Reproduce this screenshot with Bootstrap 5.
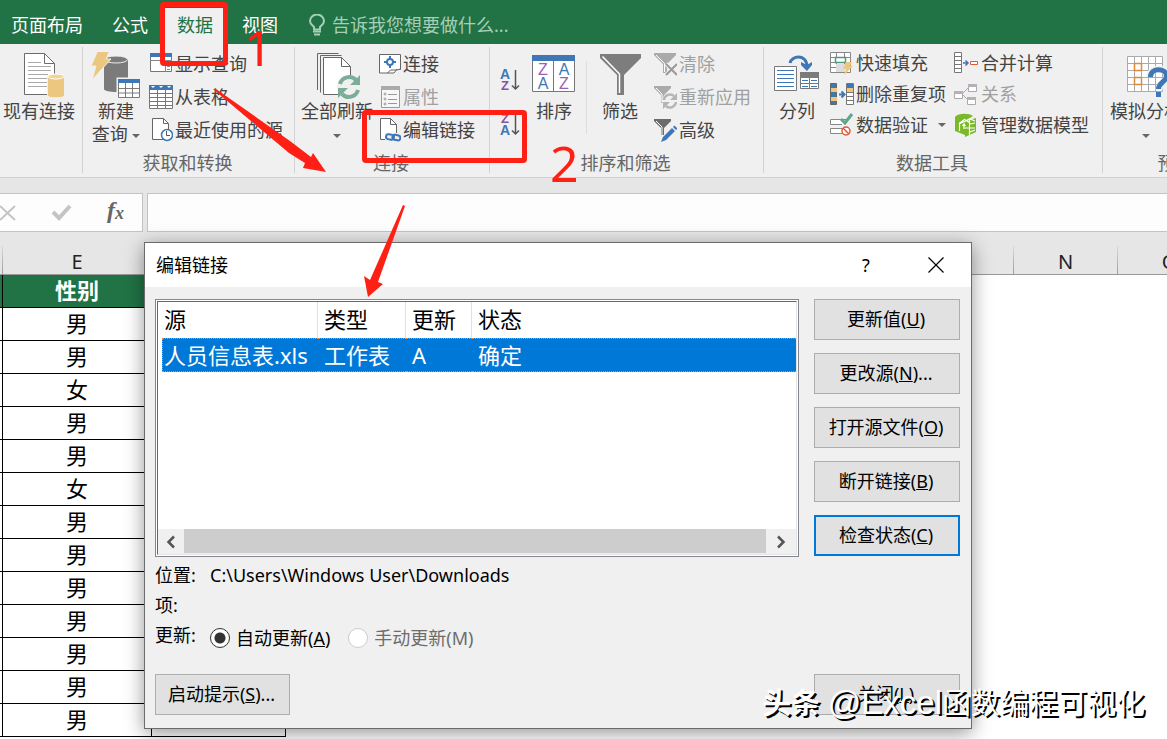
<!DOCTYPE html>
<html lang="zh-CN">
<head>
<meta charset="utf-8">
<meta name="viewport" content="width=device-width, initial-scale=1">
<title>编辑链接</title>
<link href="https://cdn.jsdelivr.net/npm/bootstrap@5.3.0/dist/css/bootstrap.min.css" rel="stylesheet">
<style>
:root { --ui: "Noto Sans", "Noto Sans CJK SC", sans-serif; --green: #217346; --red: #ff2015; }
body { font-family: var(--ui); font-size: 18px; line-height: 24px; color: #444; background: #fff; overflow: hidden; height: 100vh; }
svg { display: block; flex: none; }
button { color: inherit; }

/* tab strip */
.tab-strip { background: var(--green); height: 44px; padding-top: 8px; gap: 1px; }
.tab-strip .nav-link { color: #fff; padding: 5px 14px 7px; height: 36px; line-height: 24px; border-radius: 0; }
.tab-strip .nav-link.first-tab { padding-left: 11px; }
.tab-strip .nav-link.active { background: #f0f0f0; color: var(--green); }
.tell-me { color: #a6cfb7; margin-left: 16px; padding-bottom: 2px; gap: 7px; }
.tell-me input { background: none; border: 0; color: inherit; padding: 0; width: 260px; outline: 0; }
.tell-me input::placeholder { color: #a6cfb7; opacity: 1; }

/* ribbon */
.ribbon { background: #f0f0f0; border-bottom: 1px solid #d2d2d2; height: 134px; padding-top: 3px; overflow: hidden; }
.ribbon-group { flex: none; height: 126px; border-right: 1px solid #d2d2d2; }
.group-body { height: 105px; }
.group-label { text-align: center; color: #666; line-height: 22px; height: 22px; padding-right: 2px; }
.big-btn, .small-btn { background: none; border: 0; padding: 0; white-space: nowrap; }
.big-btn { display: flex; flex-direction: column; align-items: center; line-height: 23px; padding-top: 5px; flex: none; }
.small-btn { display: flex; align-items: center; gap: 2px; height: 33px; }
.rows-31 .small-btn { height: 31px; }
.small-btn:disabled { color: #a0a0a0; }
.caret { display: inline-block; border: 4px solid transparent; border-top-color: #666; border-bottom: 0; vertical-align: middle; }
.g-conn { width: 83px; }
.g-conn .big-btn { margin-left: 3px; }
.g-get { width: 212px; }
.g-link { width: 195px; }
.g-link .big-btn { margin-left: 6px; }
.g-sort { width: 274px; }
.g-tools { width: 339px; }
.g-forecast { width: 150px; border: 0; }
.g-forecast .big-btn { margin-left: 5px; }
.g-forecast .group-label { padding-right: 5px; }
.inner-rule { width: 1px; height: 73px; margin-top: 14px; background: #dedede; }

/* formula bar */
.formula-row { background: #e6e6e6; padding: 15px 0 0; gap: 4px; height: 54px; }
.fx-box, .fx-input { background: #fdfdfd; border: 1px solid #c3c3c3; height: 39px; }
.fx-box { width: 143px; border-left: 0; flex: none; }
.fx-box button { background: none; border: 0; padding: 0; }
.fx-input { flex: 1; border-right: 0; border-radius: 0; min-width: 0; outline: 0; }

/* sheet */
.col-heads { background: #e6e6e6; border-bottom: 1px solid #999; height: 43px; padding-top: 14px; color: #222; font-size: 20px; line-height: 32px; overflow: hidden; }
.col-heads > div { flex: none; text-align: center; width: 104px; border-right: 1px solid; border-image: linear-gradient(#ddd, #999) 1; }
.col-heads .w-d { width: 3px; }
.col-heads .w-e { width: 149px; }
.col-heads .w-f { width: 134px; }
.grid-table { table-layout: fixed; width: 286px; border-collapse: separate; border-spacing: 0; font-size: 22px; line-height: 30px; color: #000; text-align: center; }
.grid-table th, .grid-table td { height: 33px; padding: 0 0 2px; border-right: 1px solid #000; border-bottom: 1px solid #000; overflow: hidden; }
.grid-table th { background: var(--green); color: #fff; font-weight: 700; }
.grid-table th:nth-child(2) { border-right-color: var(--green); }

/* dialog window */
.link-dialog { position: absolute; left: 144px; right: 195px; top: 242px; background: #f0f0f0; border: 1px solid #6b6b6b; box-shadow: 0 4px 18px rgba(0,0,0,.42); color: #000; z-index: 5; }
.title-bar { background: #fff; height: 44px; padding-left: 11px; }
.title-bar button { background: none; border: 0; padding: 0; width: 70px; display: flex; align-items: center; justify-content: center; font-size: 18px; }
.dialog-body { padding: 12px 11px 13px 10px; gap: 15px; }
.list-frame { height: 258px; background: #fff; border: 1px solid #828790; padding: 1px; }
.list-inner { height: 100%; border: 1px solid #e3e3e3; border-left-color: #696969; border-top-color: #696969; display: flex; flex-direction: column; }
.links-table { width: calc(100% - 4px); margin-left: 4px; table-layout: fixed; font-size: 22px; border-collapse: separate; border-spacing: 0; }
.links-table th { font-weight: 400; height: 36px; line-height: 34px; padding: 0 0 2px 6px; border-right: 1px solid #e0e0e0; white-space: nowrap; }
.links-table th:first-child { padding-left: 2px; }
.links-table td:first-child { padding-left: 1px; }
.links-table th:last-child { border-right: 0; }
.links-table td { background: #0078d7; color: #fff; height: 34px; line-height: 32px; padding: 0 0 0 6px; border-top: 1px dotted #ff8728; border-bottom: 1px dotted #ff8728; white-space: nowrap; }
.links-table td:first-child { border-left: 1px dotted #ff8728; }
.h-scroll { margin-top: auto; background: #f0f0f0; height: 25px; }
.h-scroll button { border: 0; background: none; padding: 0; width: 26px; display: flex; align-items: center; justify-content: center; }
.h-scroll .right-arrow { width: 30px; }
.h-thumb { flex: 1; background: #cdcdcd; margin-bottom: 1px; }
.btn-col { width: 146px; flex: none; gap: 13px; }
.win-btn { background: #e1e1e1; border: 1px solid #adadad; height: 41px; padding: 0 2px 2px 0; color: #000; }
.win-btn.is-default { border: 2px solid #0078d7; }
.win-btn.prompt-btn { width: 135px; }
.info-rows { gap: 6px; padding-top: 6px; height: 117px; }
.info-rows .caption { width: 55px; flex: none; }
.radio-line { padding-top: 3px; }
.radio-line input { appearance: none; width: 20px; height: 20px; margin: 0 6px 0 0; border: 1px solid #333; border-radius: 50%; background: #fff; flex: none; }
.radio-line input:checked { background: radial-gradient(circle, #333 0 5px, #fff 6px); }
.radio-line input:disabled { border-color: #ccc; }
.radio-line label { margin-right: 18px; }
.radio-line input:disabled + label { color: #6d6d6d; }

/* tutorial marks over the window */
.marks { position: absolute; inset: 0; z-index: 10; pointer-events: none; overflow: hidden; }
.mark-box { position: absolute; border: 5px solid var(--red); border-radius: 4px; }
.mark-num { position: absolute; color: var(--red); font-size: 50px; line-height: 50px; }
.marks svg { position: absolute; left: 0; top: 0; }
.stamp { position: absolute; right: 22px; bottom: 18px; font-size: 29px; line-height: 36px; color: #fff; text-shadow: 2px 2px 0 #000; white-space: nowrap; }
.stamp .latin { font-family: "Liberation Sans", sans-serif; font-size: 33px; }
</style>
</head>
<body>

<nav class="tab-strip nav flex-nowrap">
  <a class="nav-link first-tab" href="#">页面布局</a>
  <a class="nav-link" href="#">公式</a>
  <a class="nav-link active" href="#">数据</a>
  <a class="nav-link" href="#">视图</a>
  <label class="tell-me d-flex align-items-center">
    <svg width="16" height="22" viewBox="0 0 16 22" fill="none" stroke="#a6cfb7" stroke-width="2"><path d="M5 15.500V13C3 11 1 10 1 7a7 6.500 0 0 1 14 0c0 3-2 4-4 6v2.500z"/><path d="M4 17.500h8M5 20.500h6"/></svg>
    <input type="text" placeholder="告诉我您想要做什么..." aria-label="告诉我您想要做什么">
  </label>
</nav>

<div class="ribbon d-flex">
  <section class="ribbon-group g-conn">
    <div class="group-body">
      <button class="big-btn"><svg width="70" height="48" viewBox="3 52 70 48"><path d="M23.500 53.500h20l10 10V94.500h-30z" fill="#fff" stroke="#6b6b6b"/><path d="M43.500 53.500v10h10" fill="none" stroke="#6b6b6b"/><path d="M27 62.500h13M27 66.500h23M27 70.500h23M27 74.500h20M27 78.500h20M27 82.500h20M27 86.500h19" stroke="#aaa"/><path d="M46.500 76.500v19c0 3 17 3 17 0v-19z" fill="#ecc77f" stroke="#f0f0f0"/><ellipse cx="55" cy="76.500" rx="8" ry="2.500" fill="#f3d493" stroke="#fff"/></svg>现有连接</button>
    </div>
  </section>

  <section class="ribbon-group g-get">
    <div class="group-body d-flex">
      <button class="big-btn ms-2"><svg width="50" height="48" viewBox="91 52 50 48"><path d="M104 59v30c0 4 24 4 24 0V59z" fill="#7b7b7b"/><ellipse cx="116" cy="59.500" rx="11.500" ry="3.500" fill="#7b7b7b" stroke="#eee"/><path d="M98 50h12l-4 9h5L92 80l4-14h-5z" fill="#ecc77f" stroke="#f0f0f0"/><path d="M118 79h22v19h-22z" fill="#fff" stroke="#f0f0f0" stroke-width="3"/><path d="M118.500 79.500h21v18h-21zM118.500 88.500h21M118.500 93h21M125.500 82v16M132.500 82v16" fill="#fff" stroke="#7a7a7a"/><path d="M118 79h22v4h-22z" fill="#3f76b5"/></svg><span>新建</span><span>查询 <i class="caret"></i></span></button>
      <div class="ps-2">
        <button class="small-btn"><svg width="24" height="24" viewBox="148 53 24 24"><path d="M149.500 54.500h21v18h-21z" fill="#fff" stroke="#777"/><path d="M149 54h22v4h-22z" fill="#3f76b5"/><path d="M149 61.500h22M164.500 61v12M166 64.500h3M166 67.500h3M166 70.500h3" stroke="#888"/></svg>显示查询</button>
        <button class="small-btn"><svg width="24" height="24" viewBox="148 85 24 24"><path d="M148.500 85.500h23v23h-23zM148 93.500h24M148 97.500h24M148 101.500h24M148 105.500h24M156.500 89v20M164.500 89v20" fill="#fff" stroke="#777"/><path d="M148 85h24v5h-24z" fill="#3f76b5"/><path d="M150 86h4l-2 2zM158 86h4l-2 2zM166 86h4l-2 2z" fill="#fff"/></svg>从表格</button>
        <button class="small-btn"><svg width="24" height="24" viewBox="148 119 24 24"><path d="M151.500 119.500h11l5 5v16h-16z" fill="#fff" stroke="#666"/><path d="M162.500 119.500v5h5" fill="none" stroke="#666"/><circle cx="166" cy="136" r="5.500" fill="#fff" stroke="#3f76b5" stroke-width="1.500"/><path d="M165.500 132v4.500h3.500" fill="none" stroke="#555"/></svg>最近使用的源</button>
      </div>
    </div>
    <div class="group-label">获取和转换</div>
  </section>

  <section class="ribbon-group g-link">
    <div class="group-body d-flex">
      <button class="big-btn"><svg width="72" height="48" viewBox="302 52 72 48"><path d="M318.500 90V53.500h21M321.500 92.500V55.500h21" fill="none" stroke="#666"/><path d="M324.500 57.500h18l9 9v28h-27z" fill="#fff" stroke="#666"/><path d="M342.500 57.500v9h9" fill="none" stroke="#666"/><circle cx="350" cy="87" r="12" fill="#f0f0f0"/><path d="M341 84a9.500 9.500 0 0 1 16-4M359 90a9.500 9.500 0 0 1-16 4" fill="none" stroke="#7bad98" stroke-width="4"/><path d="M361 75v10h-10zM339 98V88h10z" fill="#7bad98"/></svg><span>全部刷新</span><span><i class="caret"></i></span></button>
      <div class="ps-1">
        <button class="small-btn"><svg width="24" height="24" viewBox="378 52 24 24"><path d="M380.500 54.500h21v15h-21z" fill="#fff" stroke="#666"/><path d="M380.500 69v4h8l3-3h6l4-1M388 73h7l3-4" fill="#fff" stroke="#666"/><circle cx="391" cy="62" r="3" fill="none" stroke="#3f76b5" stroke-width="2"/><path d="M391 56v4M391 64v4M385 62h4M393 62h4" stroke="#3f76b5" stroke-width="2"/></svg>连接</button>
        <button class="small-btn" disabled><svg width="24" height="24" viewBox="378 85 24 24"><path d="M382.500 86.500h18v21h-18z" fill="#f7f7f7" stroke="#999"/><path d="M382 86h19v4h-19z" fill="#aaa"/><path d="M389 94.500h9M389 99.500h9M389 103.500h9" stroke="#999"/><g fill="none" stroke="#999"><circle cx="386" cy="94" r="1"/><circle cx="386" cy="99" r="1"/><circle cx="386" cy="104" r="1"/></g></svg>属性</button>
        <button class="small-btn"><svg width="24" height="24" viewBox="379 119 24 24"><path d="M382.500 119.500h10l6 6v15h-16z" fill="#fff" stroke="#666"/><path d="M392.500 119.500v6h6" fill="none" stroke="#666"/><path d="M387 134h16v8h-16z" fill="#f0f0f0"/><g fill="none" stroke="#3f76b5" stroke-width="2"><rect x="388" y="135.500" width="8" height="5" rx="2.500" transform="rotate(12 392 138)"/><rect x="394.500" y="136" width="8" height="5" rx="2.500" transform="rotate(12 398 138)"/></g></svg>编辑链接</button>
      </div>
    </div>
    <div class="group-label">连接</div>
  </section>

  <section class="ribbon-group g-sort">
    <div class="group-body d-flex">
      <div class="d-flex flex-column ps-2 pt-2">
        <button class="small-btn h-50" aria-label="升序"><svg width="24" height="24" viewBox="498 63 24 24"><text x="500" y="74.500" font-size="14" font-weight="700" fill="#3f76b5" font-family="Liberation Sans">A</text><text x="501" y="86" font-size="13" font-weight="700" fill="#8653a8" font-family="Liberation Sans">Z</text><path d="M515.500 66v19M512 81.500l3.500 3.500 3.500-3.500" fill="none" stroke="#555" stroke-width="1.500"/></svg></button>
        <button class="small-btn h-50 pb-2" aria-label="降序"><svg width="24" height="24" viewBox="498 107 24 24"><text x="501" y="117.500" font-size="13" font-weight="700" fill="#8653a8" font-family="Liberation Sans">Z</text><text x="500" y="130" font-size="14" font-weight="700" fill="#3f76b5" font-family="Liberation Sans">A</text><path d="M515.500 109v20M512 125.500l3.500 3.500 3.500-3.500" fill="none" stroke="#555" stroke-width="1.500"/></svg></button>
      </div>
      <button class="big-btn ms-2"><svg width="48" height="48" viewBox="529 52 48 48"><path d="M531.500 55.500h42v36h-42zM552.500 60v32" fill="#fff" stroke="#777"/><path d="M531 55h43v6h-43z" fill="#3f76b5"/><g font-size="16" font-family="Liberation Sans" text-anchor="middle"><text x="542" y="75" fill="#9a5fb8">Z</text><text x="542" y="88.500" fill="#3f76b5">A</text><text x="563" y="75" fill="#3f76b5">A</text><text x="563" y="88.500" fill="#9a5fb8">Z</text></g></svg>排序</button>
      <div class="inner-rule ms-2"></div>
      <button class="big-btn ms-2"><svg width="50" height="48" viewBox="596 52 50 48"><path d="M601 54h41v4l-17 17v20h-7V75L601 58z" fill="#7d7d7d"/><path d="M603.500 56.500l17 17.500v19" fill="none" stroke="#fff" stroke-width="1.500"/></svg>筛选</button>
      <div class="ps-2">
        <button class="small-btn" disabled><svg width="24" height="24" viewBox="653 52 24 24"><path d="M654 53h22v2l-9 9v9h-4v-9l-9-9z" fill="#aaa"/><path d="M656 55l8.500 8.500V72" fill="none" stroke="#fff"/><path d="M666 64l11 11M677 64l-11 11" stroke="#f0f0f0" stroke-width="4"/><path d="M666 64l11 11M677 64l-11 11" stroke="#999" stroke-width="2"/></svg>清除</button>
        <button class="small-btn" disabled><svg width="24" height="24" viewBox="653 85 24 24"><path d="M654 86h17v2l-7 7v8h-3v-8l-7-7z" fill="#aaa"/><path d="M656 88l6 6v8" fill="none" stroke="#fff"/><circle cx="670" cy="101" r="8" fill="#f0f0f0"/><path d="M664 100a6 6 0 0 1 10-4M676 102a6 6 0 0 1-10 4" fill="none" stroke="#b5b5b5" stroke-width="2.500"/><path d="M677 93v7h-7zM663 109v-7h7z" fill="#b5b5b5"/></svg>重新应用</button>
        <button class="small-btn"><svg width="24" height="24" viewBox="653 118 24 24"><path d="M654 119h17v2l-7 7v7h-3v-7l-7-7z" fill="#6b6b6b"/><path d="M656 121l6 6v8" fill="none" stroke="#fff"/><path d="M661 142l2-5 9-9 3 3-9 9zM673 127l1.500-1.500 3 3L676 130z" fill="#3f76b5"/></svg>高级</button>
      </div>
    </div>
    <div class="group-label">排序和筛选</div>
  </section>

  <section class="ribbon-group g-tools">
    <div class="group-body d-flex rows-31">
      <button class="big-btn ms-2"><svg width="50" height="48" viewBox="772 52 50 48"><path d="M774.500 66.500h22v24h-22z" fill="#fff" stroke="#777"/><path d="M777 70.500h17M777 74.500h17M777 78.500h17M777 82.500h17M777 86.500h17" stroke="#3f76b5"/><path d="M800.500 72.500h18v16h-18zM809.500 78v11M800 83.500h19" fill="#fff" stroke="#777"/><path d="M800 72h19v6h-19z" fill="#7b7b7b"/><path d="M802 80.500h6M811 80.500h6M802 86.500h6M811 86.500h6" stroke="#3f76b5"/><path d="M790 63c1-7 16-10 17 3" fill="none" stroke="#3f76b5" stroke-width="3"/><path d="M801 62l6 3 5-3v3l-5 6-6-6z" fill="#3f76b5"/></svg>分列</button>
      <div class="ps-2">
        <button class="small-btn"><svg width="24" height="24" viewBox="830 50 24 24"><path d="M830.500 51.500h20v20h-20zM830 56.500h20M830 61.500h20M830 66.500h20M836.500 51v21M844.500 51v21" fill="#fff" stroke="#888"/><path d="M835.500 56.500h10v5h-10z" fill="#fff" stroke="#4e9b80" stroke-width="1.500"/><path d="M836 63h9v8h-9z" fill="#ddd"/><path d="M846 61h6l-2 4h3l-9 9 2-6h-3z" fill="#ecc77f"/></svg>快速填充</button>
        <button class="small-btn"><svg width="24" height="24" viewBox="829 81 24 24"><path d="M829.500 82.500h6v21h-6z" fill="#3f76b5" stroke="#666"/><path d="M830 87h6v4h-6zM830 96h6v4h-6z" fill="#ecc77f"/><path d="M845.500 82.500h7v21h-7zM845 87.500h8M845 91.500h8M845 95.500h8M845 99.500h8" fill="#fff" stroke="#777"/><path d="M846 83h6v4h-6z" fill="#3f76b5"/><path d="M846 87h6v4h-6z" fill="#ecc77f"/><path d="M838 93.500h5M840.500 90.500l3 3-3 3" fill="none" stroke="#3f76b5" stroke-width="2"/></svg>删除重复项</button>
        <button class="small-btn"><svg width="24" height="24" viewBox="830 112 24 24"><path d="M849 118.500h-18.500v5H842M844 127.500h-13.500v5H844" fill="#fff" stroke="#888"/><path d="M841 118l4 4 7-9" fill="none" stroke="#5fa587" stroke-width="3"/><circle cx="846" cy="130" r="4" fill="#fff" stroke="#dd5a3a" stroke-width="1.500"/><path d="M843 127l6 6" stroke="#dd5a3a" stroke-width="1.500"/></svg>数据验证 <i class="caret ms-2"></i></button>
      </div>
      <div class="ps-2">
        <button class="small-btn"><svg width="25" height="24" viewBox="956 50 25 24"><path d="M956.500 51.500h7v20h-7zM956 55.500h8M956 59.500h8M956 63.500h8M956 67.500h8" fill="#fff" stroke="#777"/><path d="M965 62h5M967.500 59.500l2.500 2.500-2.500 2.500" fill="none" stroke="#3f76b5" stroke-width="1.500"/><path d="M972.500 60.500h7v3h-7z" fill="#fff" stroke="#dd5a3a"/></svg>合并计算</button>
        <button class="small-btn" disabled><svg width="25" height="24" viewBox="956 81 25 24"><path d="M965 92l5-5M965 94l5 5" stroke="#aaa"/><path d="M956.500 90.500h8v7h-8zM970.500 83.500h8v7h-8zM969.500 96.500h8v7h-8z" fill="#fff" stroke="#aaa"/><path d="M956 90h9v3h-9zM970 83h9v3h-9zM969 96h9v3h-9z" fill="#b8b0b8"/></svg>关系</button>
        <button class="small-btn"><svg width="25" height="24" viewBox="956 112 25 24"><path d="M957 116c3-4 14-4 18-1l-8 5v14l-10-4z" fill="#7ab929"/><path d="M967 120l11-3v14l-11 5z" fill="#7ab929"/><path d="M961.500 130v-8l5-3.500 5 3M961 123l11-5 5 2M966 128v-5l-1.500 2M966 123l1.500 2M971.500 118v16M967 127h10M972 123l5-1M972 131l5-2" fill="none" stroke="#fff" stroke-width="1.200"/></svg>管理数据模型</button>
      </div>
    </div>
    <div class="group-label">数据工具</div>
  </section>

  <section class="ribbon-group g-forecast">
    <div class="group-body">
      <button class="big-btn"><svg width="76" height="48" viewBox="1108 52 76 48"><path d="M1127.500 56.500h35v35h-35zM1134.500 56v36M1141.500 56v36M1148.500 56v36M1155.500 56v36M1127 63.500h36M1127 70.500h36M1127 77.500h36M1127 84.500h36" fill="#fff" stroke="#aaa"/><path d="M1134.500 63.500h7v7h-7zM1134.500 77.500h7v7h-7z" fill="#fff" stroke="#e08a3c" stroke-width="1.500"/><path d="M1150 77c0-11 17-10 17-1 0 7-8 6-8 14" fill="none" stroke="#f0f0f0" stroke-width="7"/><path d="M1150.500 77c0-10 16-9 16-1 0 6-8 6-8 13" fill="none" stroke="#3f76b5" stroke-width="5"/><path d="M1156 92h5v5h-5z" fill="#3f76b5"/></svg><span>模拟分析</span><span><i class="caret"></i></span></button>
    </div>
    <div class="group-label">预测</div>
  </section>
</div>

<div class="formula-row d-flex">
  <div class="fx-box d-flex align-items-center">
    <button aria-label="取消"><svg width="16" height="20" viewBox="0 0 16 20"><path d="M0 3l15 14M15 3L0 17" stroke="#c4c4c4" stroke-width="2"/></svg></button>
    <button class="ms-4 ps-2" aria-label="输入"><svg width="24" height="20" viewBox="0 0 24 20"><path d="M5 9l6 6L22 3" fill="none" stroke="#c4c4c4" stroke-width="4"/></svg></button>
    <button class="ms-4 ps-2" aria-label="插入函数"><svg width="24" height="26" viewBox="0 0 24 26" fill="#666" font-family="Liberation Serif" font-style="italic" font-weight="700"><text x="3" y="18" font-size="24">f</text><text x="11" y="19" font-size="18">x</text></svg></button>
  </div>
  <input class="fx-input" type="text" aria-label="编辑栏">
</div>

<main>
  <div class="col-heads d-flex">
    <div class="w-d"></div><div class="w-e">E</div><div class="w-f">F</div><div>G</div><div>H</div><div>I</div><div>J</div><div>K</div><div>L</div><div>M</div><div>N</div><div>O</div>
  </div>
  <table class="grid-table">
    <colgroup><col style="width:3px"><col style="width:149px"><col style="width:134px"></colgroup>
    <thead><tr><th></th><th>性别</th><th></th></tr></thead>
    <tbody>
      <tr><td></td><td>男</td><td></td></tr>
      <tr><td></td><td>男</td><td></td></tr>
      <tr><td></td><td>女</td><td></td></tr>
      <tr><td></td><td>男</td><td></td></tr>
      <tr><td></td><td>男</td><td></td></tr>
      <tr><td></td><td>女</td><td></td></tr>
      <tr><td></td><td>男</td><td></td></tr>
      <tr><td></td><td>男</td><td></td></tr>
      <tr><td></td><td>男</td><td></td></tr>
      <tr><td></td><td>男</td><td></td></tr>
      <tr><td></td><td>男</td><td></td></tr>
      <tr><td></td><td>男</td><td></td></tr>
      <tr><td></td><td>男</td><td></td></tr>
    </tbody>
  </table>
</main>

<div class="link-dialog" role="dialog" aria-labelledby="dlg-title">
  <div class="title-bar d-flex align-items-stretch">
    <div id="dlg-title" class="me-auto align-self-center">编辑链接</div>
    <button aria-label="帮助">?</button>
    <button aria-label="关闭窗口"><svg width="16" height="16" viewBox="0 0 16 16"><path d="M.5.5l15 15M15.500.5l-15 15" stroke="#000" stroke-width="1.200"/></svg></button>
  </div>
  <div class="dialog-body d-flex">
    <div class="flex-grow-1 d-flex flex-column">
      <div class="list-frame">
        <div class="list-inner">
          <table class="links-table">
            <colgroup><col style="width:156px"><col style="width:88px"><col style="width:66px"><col></colgroup>
            <thead><tr><th>源</th><th>类型</th><th>更新</th><th>状态</th></tr></thead>
            <tbody><tr><td>人员信息表.xls</td><td>工作表</td><td>A</td><td>确定</td></tr></tbody>
          </table>
          <div class="h-scroll d-flex">
            <button aria-label="向左滚动"><svg width="10" height="14" viewBox="0 0 10 14"><path d="M8 1.500L2.500 7 8 12.500" fill="none" stroke="#555" stroke-width="2.500"/></svg></button>
            <div class="h-thumb"></div>
            <button class="right-arrow" aria-label="向右滚动"><svg width="10" height="14" viewBox="0 0 10 14"><path d="M2 1.500L7.500 7 2 12.500" fill="none" stroke="#555" stroke-width="2.500"/></svg></button>
          </div>
        </div>
      </div>
      <div class="info-rows d-flex flex-column">
        <div class="d-flex"><span class="caption">位置:</span><span>C:\Users\Windows User\Downloads</span></div>
        <div class="d-flex"><span class="caption">项:</span></div>
        <div class="d-flex"><span class="caption">更新:</span>
          <div class="radio-line d-flex align-items-center">
            <input type="radio" name="upd" id="upd-auto" checked><label for="upd-auto">自动更新(<u>A</u>)</label>
            <input type="radio" name="upd" id="upd-manual" disabled><label for="upd-manual">手动更新(M)</label>
          </div>
        </div>
      </div>
      <button class="win-btn prompt-btn">启动提示(<u>S</u>)...</button>
    </div>
    <div class="btn-col d-flex flex-column">
      <button class="win-btn">更新值(<u>U</u>)</button>
      <button class="win-btn">更改源(<u>N</u>)...</button>
      <button class="win-btn">打开源文件(<u>O</u>)</button>
      <button class="win-btn">断开链接(<u>B</u>)</button>
      <button class="win-btn is-default">检查状态(<u>C</u>)</button>
      <button class="win-btn mt-auto">关闭(<u>L</u>)</button>
    </div>
  </div>
</div>

<div class="marks">
  <div class="mark-box" style="left:160px;top:2px;width:68px;height:64px"></div>
  <div class="mark-box" style="left:362px;top:110px;width:165px;height:53px"></div>
  <svg width="420" height="310" viewBox="0 0 420 310" fill="#ff2015"><path d="M213 89L216 89 290 141 311 157 313 153 326 172 303 168 305 163 289 153z"/><path d="M403 205L405 206 378 282 383 284 368 297 364 276 370 280z"/></svg>
  <div class="mark-num" style="left:244px;top:22px">1</div>
  <div class="mark-num" style="left:550px;top:138px">2</div>
  <div class="stamp"><b>头条</b> <span class="latin">@Excel</span>函数编程可视化</div>
</div>

<script src="https://cdn.jsdelivr.net/npm/bootstrap@5.3.0/dist/js/bootstrap.bundle.min.js"></script>
</body>
</html>
